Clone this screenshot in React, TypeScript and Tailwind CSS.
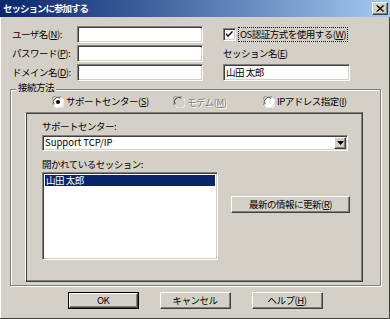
import React from "react";

const sunken =
  "border border-t-[#808080] border-l-[#808080] border-r-white border-b-white shadow-[inset_1px_1px_0_#404040,inset_-1px_-1px_0_#d4d0c8]";
const raised =
  "border border-t-white border-l-white border-r-[#404040] border-b-[#404040] shadow-[inset_-1px_-1px_0_#808080,inset_1px_1px_0_#d4d0c8]";

function U({ c }: { c: string }) {
  return <span className="underline underline-offset-[1px]">{c}</span>;
}

function Label({ text, m, tail = "" }: { text: string; m: string; tail?: string }) {
  return (
    <span className="whitespace-nowrap leading-none">
      {text}(<U c={m} />){tail}
    </span>
  );
}

function Edit({ w, value }: { w: string; value?: string }) {
  return (
    <div className={`${w} h-[17px] bg-white ${sunken} flex items-center pl-[2px] leading-none`}>
      {value}
    </div>
  );
}

function Radio({ checked, disabled }: { checked?: boolean; disabled?: boolean }) {
  return (
    <svg width="12" height="12" viewBox="0 0 12 12" className="shrink-0">
      <circle cx="6" cy="6" r="5.5" fill={disabled ? "#d4d0c8" : "#ffffff"} />
      <path d="M1.2 9 A5.3 5.3 0 0 1 9 1.2" fill="none" stroke="#808080" strokeWidth="1" />
      <path d="M2.2 8.2 A4.3 4.3 0 0 1 8.2 2.2" fill="none" stroke="#404040" strokeWidth="1" />
      <path d="M3 10.8 A5.3 5.3 0 0 0 10.8 3" fill="none" stroke="#ffffff" strokeWidth="1" />
      {checked && <circle cx="6" cy="6" r="2" fill="#000" />}
    </svg>
  );
}

function Button({ w, children, def }: { w: string; children: React.ReactNode; def?: boolean }) {
  if (def) {
    return (
      <div className={`${w} h-[17px] border border-black`}>
        <div className={`w-full h-full bg-[#d4d0c8] ${raised} flex items-center justify-center leading-none`}>
          {children}
        </div>
      </div>
    );
  }
  return (
    <div className={`${w} h-[17px] bg-[#d4d0c8] ${raised} flex items-center justify-center leading-none`}>
      {children}
    </div>
  );
}

export default function App() {
  return (
    <div className="w-[390px] h-[319px] bg-[#d4d0c8] flex flex-col overflow-hidden text-black text-[9.5px] tracking-[-0.5px] font-['Noto_Sans_CJK_JP','Noto_Sans',sans-serif] shadow-[inset_-1px_-1px_0_#404040,inset_1px_1px_0_#ffffff]">
      {/* title bar */}
      <div className="h-[17px] shrink-0 bg-linear-to-r from-[#0a246a] to-[#a6caf0] flex items-center justify-between pl-[3px] pr-[2px]">
        <span className="text-white font-bold text-[9.5px] leading-none tracking-[-1px]">セッションに参加する</span>
        <div className={`w-[16px] h-[13px] bg-[#d4d0c8] ${raised} flex items-center justify-center`}>
          <svg width="8" height="7" viewBox="0 0 8 7">
            <path d="M0.5 0.5 L7 6.5 M1.5 0.5 L8 6.5 M7 0.5 L0.5 6.5 M8 0.5 L1.5 6.5" stroke="#000" strokeWidth="1" />
          </svg>
        </div>
      </div>

      {/* top fields */}
      <div className="mt-[9px] ml-[12px] grid grid-cols-[65px_126px_20px_127px] grid-rows-[17px_17px_17px] gap-y-[2px]">
        <div className="flex items-center">
          <Label text="ユーザ名" m="N" tail=":" />
        </div>
        <Edit w="w-[126px]" />
        <div />
        <div className="flex items-center">
          <div className={`w-[13px] h-[13px] bg-white ${sunken} flex items-center justify-center shrink-0`}>
            <svg width="7" height="7" viewBox="0 0 7 7">
              <path d="M0 2 L2 4 L6.5 -0.5 V1.5 L2 6 L0 4 Z" fill="#000" />
            </svg>
          </div>
          <div className="ml-[2px] h-[15px] px-[1px] border border-dotted border-black flex items-center">
            <Label text="OS認証方式を使用する" m="W" />
          </div>
        </div>

        <div className="flex items-center">
          <Label text="パスワード" m="P" tail=":" />
        </div>
        <Edit w="w-[126px]" />
        <div />
        <div className="flex items-center">
          <Label text="セッション名" m="E" />
        </div>

        <div className="flex items-center">
          <Label text="ドメイン名" m="D" tail=":" />
        </div>
        <Edit w="w-[126px]" />
        <div />
        <Edit w="w-[127px]" value="山田 太郎" />
      </div>

      {/* group box */}
      <div className="relative mt-[8px] ml-[10px] w-[371px] h-[197px] border border-[#808080] shadow-[inset_1px_1px_0_#ffffff,1px_1px_0_#ffffff]">
        <div className="absolute left-[5px] top-[-7px] px-[2px] bg-[#d4d0c8] leading-none">接続方法</div>

        {/* radios */}
        <div className="mt-[5px] h-[14px] flex items-center pl-[41px]">
          <div className="w-[121px] flex items-center gap-[2px]">
            <Radio checked />
            <Label text="サポートセンター" m="S" />
          </div>
          <div className="w-[90px] flex items-center gap-[2px]">
            <Radio disabled />
            <span className="text-[#808080] [text-shadow:1px_1px_0_#ffffff]">
              <Label text="モデム" m="M" />
            </span>
          </div>
          <div className="flex items-center gap-[2px]">
            <Radio />
            <Label text="IPアドレス指定" m="I" />
          </div>
        </div>

        {/* inner panel */}
        <div className="mt-[3px] ml-[14px] w-[338px] h-[170px] border border-t-[#808080] border-l-white border-r-[#404040] border-b-[#404040] shadow-[inset_1px_1px_0_#404040,inset_-1px_-1px_0_#808080] pl-[16px] pt-[9px] flex flex-col">
          <div className="h-[10px] flex items-center leading-none">サポートセンター:</div>
          <div className={`mt-[3px] w-[306px] h-[16px] bg-white ${sunken} flex items-center justify-between pl-[2px] pr-[1px]`}>
            <span className="leading-none tracking-normal">Support TCP/IP</span>
            <div className={`w-[12px] h-[12px] bg-[#d4d0c8] ${raised} flex items-center justify-center`}>
              <svg width="7" height="4" viewBox="0 0 7 4">
                <path d="M0 0 H7 L3.5 4 Z" fill="#000" />
              </svg>
            </div>
          </div>
          <div className="mt-[9px] h-[10px] flex items-center leading-none">開かれているセッション:</div>
          <div className="mt-[2px] flex items-start">
            <div className={`w-[176px] h-[88px] bg-white ${sunken} p-[2px]`}>
              <div className="h-[11px] bg-[#0a246a] text-white flex items-center pl-[1px] leading-none">山田 太郎</div>
            </div>
            <div className="ml-[13px] mt-[24px]">
              <Button w="w-[119px]">
                <Label text="最新の情報に更新" m="R" />
              </Button>
            </div>
          </div>
        </div>
      </div>

      {/* bottom buttons */}
      <div className="mt-[6px] flex justify-center gap-[21px]">
        <Button w="w-[71px]" def>
          OK
        </Button>
        <Button w="w-[71px]">キャンセル</Button>
        <Button w="w-[71px]">
          <Label text="ヘルプ" m="H" />
        </Button>
      </div>
    </div>
  );
}
